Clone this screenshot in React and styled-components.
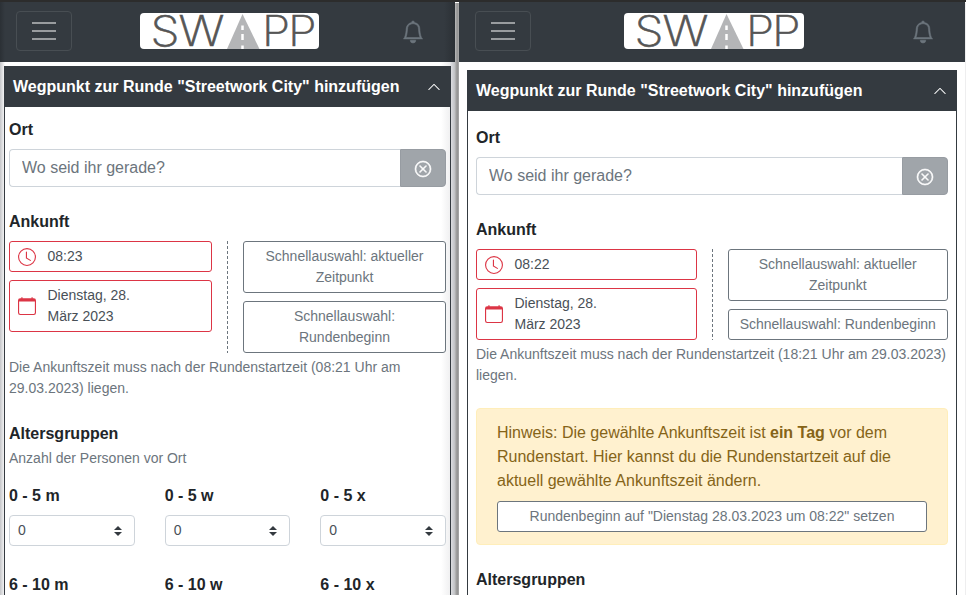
import React from "react";
import styled, { createGlobalStyle, css } from "styled-components";
import { BsBell, BsCalendar, BsChevronUp, BsClock, BsXCircle } from "react-icons/bs";

const GlobalStyle = createGlobalStyle`
  *, *::before, *::after { box-sizing: border-box; }
  body {
    margin: 0;
    overflow: hidden;
    background: #fff;
    color: #212529;
    font: 400 16px/24px "Liberation Sans", Arial, sans-serif;
  }
`;

const Screen = styled.div`
  height: 595px;
  display: flex;
  overflow: hidden;
  border-top: 2px solid #2c2c2c;
`;

const Page = styled.section`
  width: ${(p) => p.$width}px;
  flex: none;
  overflow: hidden;
  background: ${(p) =>
    p.$shaded
      ? "linear-gradient(90deg, #c4c5c8, #f2f2f3 4px, #fff 5px, #fff 441px, #ececed 450px, #dcdde0 451px, #bfc0c3 455px)"
      : "#fff"};
`;

const Divider = styled.div`
  width: 4px;
  flex: none;
  margin-top: 1px;
  background: linear-gradient(90deg, #c0c0c0, #a2a2a2 1px, #929292 3px, #b5b5b5);
`;

const Edge = styled.div`
  width: 1px;
  flex: none;
  margin-top: 1px;
  background: #eeeeef;
`;

const Navbar = styled.header`
  height: 60px;
  padding: 0 31px 2px 16px;
  display: flex;
  align-items: center;
  justify-content: space-between;
  background: ${(p) =>
    p.$shaded ? "linear-gradient(90deg, #2b3035, #343a40 5px, #343a40 444px, #2b3035)" : "#343a40"};
`;

const Toggler = styled.button`
  width: 56px;
  height: 40px;
  padding: 0 15px;
  display: flex;
  flex-direction: column;
  justify-content: center;
  gap: 6px;
  background: transparent;
  border: 1px solid #484e53;
  border-radius: 4px;
`;

const TogglerBar = styled.span`
  height: 2px;
  background: #999c9f;
`;

const LogoBox = styled.svg`
  width: ${(p) => p.$width}px;
  height: 36px;
  background: #fff;
  border-radius: 4px;
`;

const LogoText = styled.text`
  font: 200 42px Inter, sans-serif;
  fill: #555;
  stroke: #555;
  stroke-width: 0.6px;
`;

const BellButton = styled.span`
  display: flex;
  padding: 2px 0 0 15px;
  color: #6c757d;
  font-size: 22px;

  svg { stroke: currentColor; stroke-width: 0.4px; overflow: visible; }
`;

const Card = styled.article`
  height: 600px;
  margin: ${(p) => (p.$roomy ? "8px 8px 0" : "4px 4px 0")};
  border: 1px solid #343a40;
  background: ${(p) =>
    p.$roomy ? "#fff" : "linear-gradient(90deg, #fff 436px, #f0f0f1)"};
`;

const CardHeader = styled.h2`
  height: 40px;
  margin: 0;
  padding: 0 8px;
  display: flex;
  align-items: center;
  justify-content: space-between;
  background: #343a40;
  color: #fff;
  font-size: 16px;
  line-height: 24px;

  svg { margin-right: 1px; font-size: 14px; }
`;

const CardBody = styled.div`
  padding: ${(p) => (p.$roomy ? "15px 8px" : "11px 4px")};
`;

const Label = styled.label`
  display: block;
  margin-bottom: ${(p) => p.$bottom ?? 7}px;
  font-weight: 700;
`;

const InputGroup = styled.div`
  height: 38px;
  margin-bottom: 23px;
  display: flex;
`;

const Input = styled.input`
  flex: 1;
  min-width: 0;
  padding: 0 12px;
  background: #fff;
  border: 1px solid #ced4da;
  border-right: 0;
  border-radius: 4px 0 0 4px;
  font: inherit;
  outline: 0;

  &::placeholder { color: #6c757d; opacity: 1; }
`;

const ClearButton = styled.button`
  width: 46px;
  padding: 2px 0 0;
  display: grid;
  place-items: center;
  background: #a0a5aa;
  border: 1px solid #979ca2;
  border-radius: 0 4px 4px 0;
  color: #fff;
  font-size: 16px;

  svg { stroke: #fff; stroke-width: 0.6px; overflow: visible; }
`;

const TimeGrid = styled.div`
  display: grid;
  grid-template-columns: 1fr 1px 1fr;
  column-gap: 15px;
`;

const Separator = styled.div`
  background: repeating-linear-gradient(#6c757d 0 3px, transparent 3px 5px);
`;

const Stack = styled.div`
  display: flex;
  flex-direction: column;
  gap: 8px;
`;

const small = css`
  font-size: 14px;
  line-height: 21px;
`;

const PickerField = styled.div`
  ${small}
  padding: 4px 8px;
  display: flex;
  align-items: center;
  gap: 11.5px;
  border: 1px solid #dc3545;
  border-radius: 3px;
  background: #fff;
  color: #495057;

  svg { flex: none; color: #dc3545; font-size: 18px; }
`;

const PickerValue = styled.span`
  max-width: 112px;
`;

const OutlineButton = styled.button`
  ${small}
  width: 100%;
  padding: 4px 8px;
  background: #fff;
  border: 1px solid #6c757d;
  border-radius: 3px;
  color: #6c757d;
  font-family: inherit;
`;

const HelpText = styled.p`
  ${small}
  margin: ${(p) => p.$margin};
  color: #6c757d;
`;

const Alert = styled.div`
  margin-bottom: 23px;
  padding: 12px 20px;
  background: #fff1cf;
  border: 1px solid #ffeeba;
  border-radius: 4px;
  color: #856418;
`;

const AlertText = styled.p`
  margin: 0 0 8px;
`;

const AgeGrid = styled.div`
  display: grid;
  grid-template-columns: repeat(3, 1fr);
  gap: 27px 30px;
`;

const SelectBox = styled.div`
  ${small}
  height: 31px;
  padding: 0 12px 1px 8px;
  display: flex;
  align-items: center;
  justify-content: space-between;
  background: #fff;
  border: 1px solid #ced4da;
  border-radius: 4px;
  color: #495057;

  svg { width: 8px; height: 10px; margin-top: 2px; }
`;

function Logo({ width }) {
  return (
    <LogoBox $width={width} viewBox={`0 0 ${width} 36`} aria-label="SWAPP">
      <LogoText x="10.5" y="32.5" textLength="29" lengthAdjust="spacingAndGlyphs">S</LogoText>
      <LogoText x="38.5" y="32.5" textLength="46" lengthAdjust="spacingAndGlyphs">W</LogoText>
      <path d="M102.5 1 87 36h32.5z" fill="#b4b5b7" />
      <path d="M102.5 12.5V17M102.5 21v6M102.5 32.5V36" stroke="#fff" strokeWidth="2.5" />
      <LogoText x="122" y="32.5" textLength="28" lengthAdjust="spacingAndGlyphs">P</LogoText>
      <LogoText x="148" y="32.5" textLength="28.5" lengthAdjust="spacingAndGlyphs">P</LogoText>
    </LogoBox>
  );
}

function NavigationBar({ logoWidth, shaded }) {
  return (
    <Navbar $shaded={shaded}>
      <Toggler aria-label="Menü">
        <TogglerBar />
        <TogglerBar />
        <TogglerBar />
      </Toggler>
      <Logo width={logoWidth} />
      <BellButton><BsBell /></BellButton>
    </Navbar>
  );
}

function AgeSelect({ label }) {
  return (
    <div>
      <Label>{label}</Label>
      <SelectBox>
        0
        <svg viewBox="0 0 8 10" fill="#343a40"><path d="M4 0 0 4h8zM4 10 0 6h8z" /></svg>
      </SelectBox>
    </div>
  );
}

function WaypointPage({ width, roomy, logoWidth, time, help, helpMargin, notice, ages }) {
  return (
    <Page $width={width} $shaded={!roomy}>
      <NavigationBar logoWidth={logoWidth} shaded={!roomy} />
      <Card $roomy={roomy}>
        <CardHeader>
          Wegpunkt zur Runde "Streetwork City" hinzufügen
          <BsChevronUp />
        </CardHeader>
        <CardBody $roomy={roomy}>
          <Label>Ort</Label>
          <InputGroup>
            <Input placeholder="Wo seid ihr gerade?" />
            <ClearButton aria-label="Leeren"><BsXCircle /></ClearButton>
          </InputGroup>
          <Label>Ankunft</Label>
          <TimeGrid>
            <Stack>
              <PickerField><BsClock />{time}</PickerField>
              <PickerField>
                <BsCalendar />
                <PickerValue>Dienstag, 28. März 2023</PickerValue>
              </PickerField>
            </Stack>
            <Separator />
            <Stack>
              <OutlineButton>Schnellauswahl: aktueller Zeitpunkt</OutlineButton>
              <OutlineButton>Schnellauswahl: Rundenbeginn</OutlineButton>
            </Stack>
          </TimeGrid>
          <HelpText $margin={helpMargin}>{help}</HelpText>
          {notice}
          <Label $bottom={2}>Altersgruppen</Label>
          <HelpText $margin="0 0 15px">Anzahl der Personen vor Ort</HelpText>
          <AgeGrid>
            {ages.map((age) => <AgeSelect key={age} label={age} />)}
          </AgeGrid>
        </CardBody>
      </Card>
    </Page>
  );
}

const ages = ["0 - 5 m", "0 - 5 w", "0 - 5 x", "6 - 10 m", "6 - 10 w", "6 - 10 x"];

export default function App() {
  return (
    <>
      <GlobalStyle />
      <Screen>
        <WaypointPage
          width={455}
          logoWidth={179}
          time="08:23"
          help="Die Ankunftszeit muss nach der Rundenstartzeit (08:21 Uhr am 29.03.2023) liegen."
          helpMargin="4px 0 23px"
          ages={ages}
        />
        <Divider />
        <WaypointPage
          roomy
          width={506}
          logoWidth={180}
          time="08:22"
          help="Die Ankunftszeit muss nach der Rundenstartzeit (18:21 Uhr am 29.03.2023) liegen."
          helpMargin="4px 0 22px"
          notice={
            <Alert>
              <AlertText>
                Hinweis: Die gewählte Ankunftszeit ist <b>ein Tag</b> vor dem Rundenstart. Hier
                kannst du die Rundenstartzeit auf die aktuell gewählte Ankunftszeit ändern.
              </AlertText>
              <OutlineButton>Rundenbeginn auf "Dienstag 28.03.2023 um 08:22" setzen</OutlineButton>
            </Alert>
          }
          ages={ages}
        />
        <Edge />
      </Screen>
    </>
  );
}
